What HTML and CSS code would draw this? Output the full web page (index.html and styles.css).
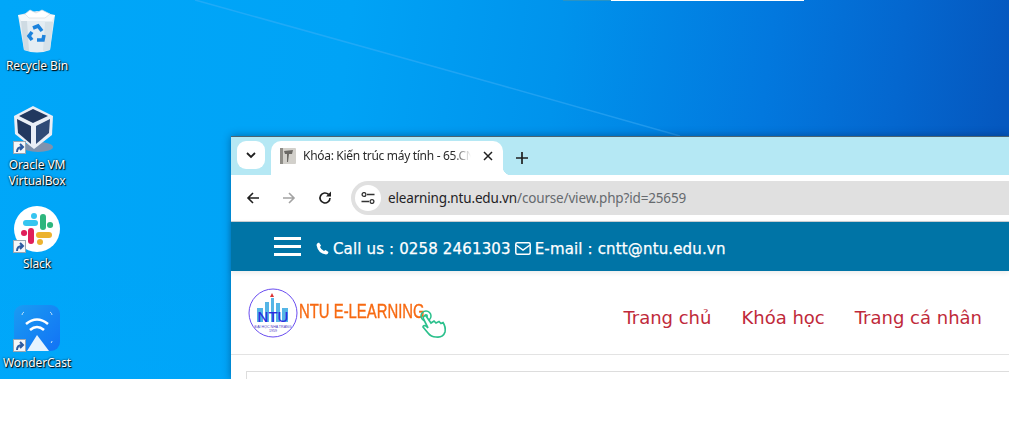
FILE: index.html
```html
<!DOCTYPE html>
<html lang="vi">
<head>
<meta charset="utf-8">
<title>Desktop</title>
<link rel="stylesheet" href="styles.css">
</head>
<body>
<main class="desktop">
  <svg class="beam" viewBox="0 0 1009 379" width="1009" height="379" aria-hidden="true">
    <path d="M195 0 L500 85 L680 136" stroke="#4db4f7" stroke-opacity=".4" stroke-width="1.6" fill="none"/>
  </svg>
  <div class="topstrip"><span class="strip-teal"></span><span class="strip-white"></span></div>

  <div class="icon icon-bin">
    <svg width="40" height="44" viewBox="0 0 40 44">
      <path d="M1 6 L20 2 L38 6 L33 41 Q20 46 7 41 Z" fill="#e4edf3"/>
      <path d="M1 6 L38 6 L35 12 L4 12 Z" fill="#f6f9fb"/>
      <path d="M8 5 L13 1 L19 4 L25 1 L33 5 L28 9 L12 9 Z" fill="#fff" stroke="#d5dde3" stroke-width=".7"/>
      <path d="M4 12 L7 41 L12 42 L10 12 Z" fill="#cfdbe3"/>
      <path d="M28 13 L26 42 L33 41 L36 13 Z" fill="#d6e1e8"/>
      <g fill="none" stroke="#1c83dd" stroke-width="3.6">
        <path d="M16 19 L21 17 L25 22"/>
        <path d="M27 26 L26 31 L20 31"/>
        <path d="M15 31 L12 27 L15 23"/>
      </g>
    </svg>
    <span class="label">Recycle Bin</span>
  </div>

  <div class="icon icon-vbox">
    <svg width="42" height="48" viewBox="0 0 42 48">
      <ellipse cx="25" cy="42" rx="15" ry="5" fill="#7f92ad"/>
      <path d="M20 1 L40 11 L39 30 L21 44 L2 29 L1 11 Z" fill="#e9eef6"/>
      <path d="M20 4 L35 11 L20 18 L6 11 Z" fill="#22385f"/>
      <path d="M4 14 L18 21 L18 39 L5 28 Z" fill="#22385f"/>
      <path d="M23 21 L37 14 L36 28 L23 39 Z" fill="#2f4a76"/>
    </svg>
    <span class="label">Oracle VM<br>VirtualBox</span>
  </div>

  <div class="icon icon-slack">
    <svg width="46" height="46" viewBox="0 0 46 46">
      <circle cx="23" cy="23" r="23" fill="#fff"/>
      <g stroke-width="6" stroke-linecap="round" fill="none">
        <path d="M21 17 H12" stroke="#36c5f0"/><path d="M20 10 V10.1" stroke="#36c5f0"/>
        <path d="M29 21 V11" stroke="#2eb67d"/><path d="M36 19 H36.1" stroke="#2eb67d"/>
        <path d="M25 29 H35" stroke="#ecb22e"/><path d="M26 36 V36.1" stroke="#ecb22e"/>
        <path d="M17 25 V35" stroke="#e01e5a"/><path d="M10 27 H10.1" stroke="#e01e5a"/>
      </g>
    </svg>
    <span class="label">Slack</span>
  </div>

  <div class="icon icon-wonder">
    <svg width="46" height="46" viewBox="0 0 46 46">
      <defs>
        <linearGradient id="wc" x1="0" y1="0" x2="1" y2="1">
          <stop offset="0" stop-color="#1a9cf2"/><stop offset="1" stop-color="#1272f5"/>
        </linearGradient>
      </defs>
      <rect width="46" height="46" rx="9" fill="url(#wc)"/>
      <path d="M12 19 Q23 10 34 19" stroke="#fff" stroke-width="2.6" fill="none"/>
      <path d="M16 25 Q23 19 30 25" stroke="#fff" stroke-width="2.6" fill="none"/>
      <path d="M23 30 L35 46 L13 46 Z" fill="#e6f3fe"/>
      <path d="M8 10 Q8 8 10 7 M36 7 Q38 8 38 10 M38 36 Q38 37 37 38" stroke="#bfe2fb" fill="none"/>
    </svg>
    <span class="label">WonderCast</span>
  </div>

  <span class="shortcut s1"><svg width="10" height="10" viewBox="0 0 10 10"><path d="M2 9 Q2 4 7 4 M5 1 L8 4 L5 7" fill="none" stroke="#2c5aa0" stroke-width="2"/></svg></span>
  <span class="shortcut s2"><svg width="10" height="10" viewBox="0 0 10 10"><path d="M2 9 Q2 4 7 4 M5 1 L8 4 L5 7" fill="none" stroke="#2c5aa0" stroke-width="2"/></svg></span>
  <span class="shortcut s3"><svg width="10" height="10" viewBox="0 0 10 10"><path d="M2 9 Q2 4 7 4 M5 1 L8 4 L5 7" fill="none" stroke="#2c5aa0" stroke-width="2"/></svg></span>

  <section class="window">
    <div class="tabstrip">
      <button class="tabsearch" aria-label="Tab search">
        <svg width="12" height="8" viewBox="0 0 12 8"><path d="M2 2 L6 6 L10 2" fill="none" stroke="#1f1f1f" stroke-width="1.8"/></svg>
      </button>
      <div class="tab">
        <svg class="favicon" width="16" height="16" viewBox="0 0 16 16">
          <rect width="16" height="16" rx="1" fill="#d2d0cb"/>
          <rect x="0" y="0" width="3" height="16" fill="#8f8d88"/>
          <path d="M4 3 L13 2 L12 6 L9 6 L8 14 L7 14 L7 6 L5 6 Z" fill="#6b6965"/>
        </svg>
        <span class="tab-title">Khóa: Kiến trúc máy tính - 65.CN</span>
        <svg class="tab-close" width="10" height="10" viewBox="0 0 10 10"><path d="M1 1 L9 9 M9 1 L1 9" stroke="#1f1f1f" stroke-width="1.5"/></svg>
      </div>
      <svg class="newtab" width="12" height="12" viewBox="0 0 12 12"><path d="M6 0 V12 M0 6 H12" stroke="#1f1f1f" stroke-width="1.7"/></svg>
    </div>

    <div class="toolbar">
      <svg class="nav-ic" width="14" height="14" viewBox="0 0 14 14"><path d="M13 7 H2 M7 2 L2 7 L7 12" fill="none" stroke="#1f1f1f" stroke-width="1.6"/></svg>
      <svg class="nav-ic" width="14" height="14" viewBox="0 0 14 14"><path d="M1 7 H12 M7 2 L12 7 L7 12" fill="none" stroke="#a3a3a3" stroke-width="1.6"/></svg>
      <svg class="nav-ic" width="14" height="14" viewBox="0 0 14 14"><path d="M12 7 A5 5 0 1 1 10.5 3.4" fill="none" stroke="#1f1f1f" stroke-width="1.6"/><path d="M13 0.5 V5.5 H8 Z" fill="#1f1f1f"/></svg>
      <div class="address">
        <span class="tune">
          <svg width="14" height="12" viewBox="0 0 14 12">
            <g fill="none" stroke="#333" stroke-width="1.3">
              <path d="M6 2.5 H13.5 M0.5 9.5 H8"/>
              <circle cx="3" cy="2.5" r="1.9"/><circle cx="11" cy="9.5" r="1.9"/>
            </g>
          </svg>
        </span>
        <span class="url"><span class="host">elearning.ntu.edu.vn</span>/course/view.php?id=25659</span>
      </div>
    </div>

    <div class="contactbar">
      <span class="burger"><i></i><i></i><i></i></span>
      <svg class="ph" width="13" height="13" viewBox="0 0 13 13"><path d="M3 0.5 L5 3.5 L4 5 Q5 7.5 8 9 L9.5 8 L12.5 10 Q12 12.5 10 12.5 Q2 11.5 0.5 3 Q0.5 1 3 0.5 Z" fill="#fff"/></svg>
      <span class="ctext">Call us : 0258 2461303</span>
      <svg class="env" width="16" height="13" viewBox="0 0 16 13"><rect x="0.8" y="0.8" width="14.4" height="11.4" rx="1.5" fill="none" stroke="#fff" stroke-width="1.5"/><path d="M1 3 L8 8 L15 3" fill="none" stroke="#fff" stroke-width="1.5"/></svg>
      <span class="ctext">E-mail : cntt@ntu.edu.vn</span>
    </div>

    <header class="sitehead">
      <div class="logo">
        <svg class="seal" width="50" height="50" viewBox="0 0 50 50">
          <circle cx="25" cy="25" r="24" fill="#fff" stroke="#6a4df0" stroke-width="1"/>
          <path d="M24 5 L26 9 L22 9 Z" fill="#d33"/>
          <g fill="#55b5e6">
            <rect x="9" y="20" width="6" height="14"/><rect x="17" y="14" width="4" height="20"/>
            <rect x="23" y="10" width="3" height="24"/><rect x="28" y="15" width="4" height="19"/><rect x="34" y="20" width="6" height="14"/>
          </g>
          <text x="25" y="34" class="seal-t">NTU</text>
          <text x="25" y="39.5" class="seal-s">ĐẠI HỌC NHA TRANG</text>
          <text x="25" y="44" class="seal-s">1959</text>
        </svg>
        <span class="logotext">NTU E-LEARNING</span>
        <svg class="hand" width="28" height="32" viewBox="0 0 28 32">
          <circle cx="6" cy="9" r="5" fill="none" stroke="#2bc08c" stroke-width="1.5"/>
          <circle cx="6" cy="9" r="2" fill="#2bc08c"/>
          <path d="M6 9 L11 16 L14 14 L16 16 L19 14.5 L21 16.5 L23 15.5 Q26 20 25 25 Q23 31 16 30 Q11 30 8 26 L3 20 Q3 18 6 19 L8 21 L3 11 Q4 8 6 9 Z" fill="#fff" stroke="#2bc08c" stroke-width="1.7"/>
        </svg>
      </div>
      <nav class="mainnav">
        <a>Trang chủ</a>
        <a>Khóa học</a>
        <a>Trang cá nhân</a>
      </nav>
    </header>

    <div class="content"><div class="card"></div></div>
  </section>
</main>
</body>
</html>
```
FILE: styles.css
```css
* { box-sizing: border-box; }
html, body { margin: 0; background: #fff; }
body { width: 1009px; height: 440px; overflow: hidden; }

.desktop {
  position: relative;
  height: 379px;
  overflow: hidden;
  background:
    linear-gradient(180deg, rgba(0,0,0,0) 70%, rgba(0,170,255,.25) 100%),
    linear-gradient(97deg, #00a7f9 0, #00a3f6 350px, #0093ec 560px, #0278de 770px, #0467cf 900px, #0558bf 1009px);
}
.beam { position: absolute; left: 0; top: 0; }

.topstrip { position: absolute; left: 563px; top: 0; display: flex; height: 1px; }
.strip-teal { width: 48px; background: #2a93c4; }
.strip-white { width: 193px; background: #fff; }

.icon { position: absolute; display: flex; flex-direction: column; align-items: center; width: 74px; left: 0; }
.icon svg { display: block; }
.icon-bin { top: 9px; }
.icon-vbox { top: 105px; }
.icon-vbox svg { margin-right: 6px; }
.icon-slack { top: 206px; }
.icon-wonder { top: 305px; }
.label {
  font: 12px/16px "Noto Sans", sans-serif;
  letter-spacing: -.1px;
  color: #fff;
  text-align: center;
  white-space: nowrap;
  text-shadow: 1px 1px 1px #000, 0 0 2px #000;
}
.icon-bin .label { margin-top: 5px; }
.icon-vbox .label { margin-top: 4px; }
.icon-slack .label { margin-top: 4px; }
.icon-wonder .label { margin-top: 4px; }

.shortcut {
  position: absolute; left: 13px; width: 13px; height: 13px;
  background: #f4f6f8; border: 1px solid #9aa6b2;
  display: flex; align-items: center; justify-content: center;
}
.s1 { top: 141px; }
.s2 { top: 240px; }
.s3 { top: 339px; }

.window {
  position: absolute; left: 231px; top: 136px; right: 0; bottom: 0;
  display: flex; flex-direction: column;
  background: #fff;
  border-top: 1px solid #4b6470;
  box-shadow: 0 0 8px rgba(0,30,70,.45);
}

.tabstrip {
  height: 38px; flex: none;
  background: #b5e8f4;
  display: flex; align-items: flex-start;
  padding: 4px 0 0 6px;
}
.tabsearch {
  width: 28px; height: 28px; border: 0; padding: 0;
  background: #fff; border-radius: 9px;
  display: flex; align-items: center; justify-content: center;
}
.tab {
  position: relative;
  width: 232px; height: 34px; margin-left: 6px;
  background: #fff; border-radius: 10px 10px 0 0;
  display: flex; align-items: center;
  padding: 0 0 4px 9px;
}
.tab::after {
  content: ""; position: absolute; right: -8px; bottom: 0; width: 8px; height: 8px;
  background: radial-gradient(circle at 100% 0, transparent 8px, #fff 8.5px);
}
.favicon { flex: none; }
.tab-title {
  margin-left: 7px; width: 168px; flex: none; white-space: nowrap;
  font: 12px/16px "Noto Sans", sans-serif; color: #2b2b2b;
  letter-spacing: -.3px;
  -webkit-mask-image: linear-gradient(90deg, #000 150px, transparent 168px);
  mask-image: linear-gradient(90deg, #000 150px, transparent 168px);
}
.tab-close { margin-left: 12px; flex: none; }
.newtab { margin: 11px 0 0 13px; flex: none; }

.toolbar {
  height: 46px; flex: none;
  background: #fff; border-radius: 8px 0 0 0;
  display: flex; align-items: center;
  padding: 0 0 0 15px;
}
.nav-ic { flex: none; margin-right: 22px; }
.nav-ic:nth-child(3) { margin-right: 19px; }
.address {
  flex: 1; height: 34px;
  background: #e0e0e0; border-radius: 17px 0 0 17px;
  display: flex; align-items: center;
  padding-left: 4px;
}
.tune {
  width: 26px; height: 26px; border-radius: 50%;
  background: #fff;
  display: flex; align-items: center; justify-content: center;
}
.url {
  margin-left: 7px; white-space: nowrap;
  font: 13.5px/20px "Noto Sans", sans-serif; color: #666a6e;
  letter-spacing: -.16px;
}
.host { color: #1f2225; }

.contactbar {
  height: 50px; flex: none;
  background: #0074a6;
  border-top: 1px solid #c6ccd0;
  display: flex; align-items: center;
  padding-left: 43px;
  box-shadow: 0 2px 5px rgba(0,0,0,.08);
  color: #fff;
}
.burger { width: 27px; display: flex; flex-direction: column; gap: 5px; margin-right: 15px; }
.burger i { display: block; height: 3px; background: #fff; }
.ph { margin-right: 4px; flex: none; margin-top: 3px; }
.env { margin: 3px 4px 0 4px; flex: none; }
.ctext {
  font: 15px/20px "DejaVu Sans", sans-serif; white-space: nowrap;
  letter-spacing: .15px;
  margin-top: 4px;
  -webkit-text-stroke: .25px #fff;
}

.sitehead {
  height: 84px; flex: none;
  border-bottom: 1px solid #e3e3e3;
  display: flex; align-items: center;
  padding: 0 27px 0 17px;
}
.logo { display: flex; align-items: center; position: relative; }
.seal { flex: none; }
.seal-t { font: 15px "Liberation Sans", sans-serif; fill: #2a2ae0; text-anchor: middle; stroke: #2a2ae0; stroke-width: .2; }
.seal-s { font: 3.6px "Liberation Sans", sans-serif; fill: #4a3ac0; text-anchor: middle; }
.logotext {
  margin-left: 1px; white-space: nowrap;
  font: 16px/20px "Liberation Sans", sans-serif; color: #f76a12;
  -webkit-text-stroke: .3px #f76a12;
  transform: scale(.93, 1.22);
  transform-origin: left center;
  margin-top: -2px;
}
.hand { position: absolute; left: 172px; top: 19px; }
.mainnav { margin-left: auto; display: flex; gap: 30px; margin-top: 10px; }
.mainnav a { font: 18px/24px "DejaVu Sans", sans-serif; color: #bf2a3a; white-space: nowrap; }

.content { flex: 1; padding: 16px 0 0 15px; }
.card { height: 100%; border: 1px solid #ddd; border-right: 0; border-bottom: 0; }
```
